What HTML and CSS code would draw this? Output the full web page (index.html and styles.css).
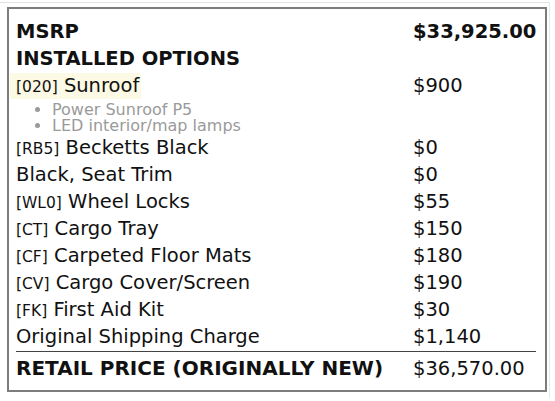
FILE: index.html
```html
<!DOCTYPE html>
<html>
<head>
<meta charset="utf-8">
<link rel="stylesheet" href="styles.css">
</head>
<body>
<div class="frame">
  <div class="sticker">
    <div class="row head"><span>MSRP</span><span>$33,925.00</span></div>
    <div class="row head"><span>INSTALLED OPTIONS</span><span></span></div>
    <div class="row"><span><span class="hl"><span class="code">[020]</span> Sunroof</span></span><span>$900</span></div>
    <ul class="sub">
      <li>Power Sunroof P5</li>
      <li>LED interior/map lamps</li>
    </ul>
    <div class="row"><span><span class="code">[RB5]</span> Becketts Black</span><span>$0</span></div>
    <div class="row"><span>Black, Seat Trim</span><span>$0</span></div>
    <div class="row"><span><span class="code">[WL0]</span> Wheel Locks</span><span>$55</span></div>
    <div class="row"><span><span class="code">[CT]</span> Cargo Tray</span><span>$150</span></div>
    <div class="row"><span><span class="code">[CF]</span> Carpeted Floor Mats</span><span>$180</span></div>
    <div class="row"><span><span class="code">[CV]</span> Cargo Cover/Screen</span><span>$190</span></div>
    <div class="row"><span><span class="code">[FK]</span> First Aid Kit</span><span>$30</span></div>
    <div class="row"><span>Original Shipping Charge</span><span>$1,140</span></div>
    <div class="row total"><span class="b">RETAIL PRICE (ORIGINALLY NEW)</span><span>$36,570.00</span></div>
  </div>
</div>
</body>
</html>
```

FILE: styles.css
```css
html, body {
  margin: 0;
  padding: 0;
  background: #fff;
}
body {
  font-family: "DejaVu Sans", sans-serif;
  color: #111;
}
.frame {
  margin: 2px 0 0 0;
  width: 550px;
  height: 396px;
  border-top: 1px solid #e2e2e2;
  border-right: 1px solid #e8e8e8;
  box-sizing: border-box;
  padding: 4px 0 0 7px;
}
.sticker {
  width: 540px;
  box-sizing: border-box;
  border: 2px solid #7c7c7c;
  padding: 9px 9px 8px 7px;
}
.row {
  display: grid;
  grid-template-columns: 397px 1fr;
  font-size: 19.5px;
  line-height: 27px;
  height: 27px;
  white-space: nowrap;
}
.head {
  font-weight: bold;
}
.code {
  font-size: 15.5px;
  line-height: 1;
}
.hl {
  display: inline-block;
  background: #fcf9e4;
  margin-left: -6px;
  padding: 0 2px 0 6px;
  line-height: 26px;
}
.sub {
  margin: 3px 0 0 0;
  padding: 0 0 0 36px;
  font-size: 16px;
  line-height: 16px;
  color: #9a9a9a;
}
.total {
  border-top: 1px solid #444;
  margin-top: 1px;
  padding-top: 3px;
}
.b {
  font-weight: bold;
  font-size: 20px;
}
```
